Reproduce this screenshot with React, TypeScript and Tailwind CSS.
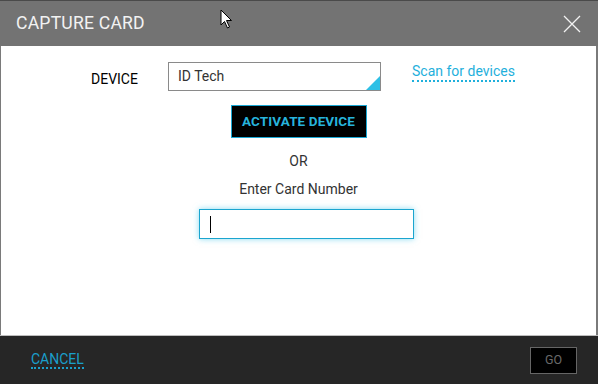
import React from "react";

export default function App() {
  return (
    <div
      className="relative flex h-[384px] w-[598px] flex-col overflow-hidden bg-white"
      style={{ fontFamily: "Roboto, 'Liberation Sans', sans-serif" }}
    >
      {/* Header */}
      <div className="flex h-[46px] shrink-0 items-center justify-between border-t border-[#4a4a4a] bg-[#737373] pl-[16px] pr-[17px]">
        <h1 className="text-[17.6px] font-normal tracking-[0.2px] text-[#f2f2f2]">CAPTURE CARD</h1>
        <svg width="18" height="18" viewBox="0 0 18 18" className="text-[#f2f2f2]">
          <path d="M1 1 L17 17 M17 1 L1 17" stroke="currentColor" strokeWidth="1.3" fill="none" />
        </svg>
      </div>

      {/* Body */}
      <div className="flex flex-1 flex-col border-l border-r-2 border-[#7a7a7a] text-[#2b2b2b]">
        <div className="mt-[16px] flex items-start pl-[90px]">
          <span className="mt-[7px] w-[77px] text-[14px] text-black">DEVICE</span>
          <div className="relative flex h-[29px] w-[213px] items-center border border-[#8a8a8a] pl-[9px] text-[14px] text-[#333]">
            ID Tech
            <span className="absolute bottom-0 right-0 h-0 w-0 border-b-[14px] border-l-[14px] border-b-[#2ec0e6] border-l-transparent" />
          </div>
          <a className="ml-[31px] mt-[1px] border-b-2 border-dotted border-[#1fb0dc] pb-[1px] text-[14px] leading-[16px] text-[#1fb0dc]">
            Scan for devices
          </a>
        </div>

        <button className="mx-auto mt-[14px] flex h-[33px] w-[136px] items-center justify-center border border-[#1aa8d4] bg-black text-[13.5px] font-bold tracking-[0.1px] text-[#27b4dd]">
          ACTIVATE DEVICE
        </button>

        <p className="mt-[15px] text-center text-[14px] leading-[16px] text-[#333]">OR</p>
        <p className="mt-[12px] text-center text-[14px] leading-[16px] text-[#333]">Enter Card Number</p>

        <div className="ml-[198px] mt-[12px] flex h-[30px] w-[215px] items-center border border-[#1ba5cf] pl-[10px] shadow-[0_0_6px_rgba(40,190,230,0.55)]">
          <span className="h-[17px] w-[1px] bg-black" />
        </div>
      </div>

      {/* Footer */}
      <div className="flex h-[49px] shrink-0 items-center justify-between border-t border-[#bdbdbd] bg-[#262626] pl-[31px] pr-[21px]">
        <a className="border-b-2 border-dotted border-[#1a9fcb] text-[14px] leading-[16px] text-[#1a9fcb]">CANCEL</a>
        <button className="flex h-[27px] w-[47px] items-center justify-center border border-[#666] bg-black text-[12.5px] text-[#6a6a6a]">
          GO
        </button>
      </div>

      {/* Mouse pointer over the header */}
      <svg
        className="absolute left-[220px] top-[9px]"
        width="14"
        height="21"
        viewBox="0 0 14 21"
      >
        <path
          d="M1 1 L1 16 L4.5 12.5 L7.5 19 L9.5 18 L6.5 11.5 L11.5 11.5 Z"
          fill="white"
          stroke="black"
          strokeWidth="1"
          strokeLinejoin="round"
        />
      </svg>
    </div>
  );
}
